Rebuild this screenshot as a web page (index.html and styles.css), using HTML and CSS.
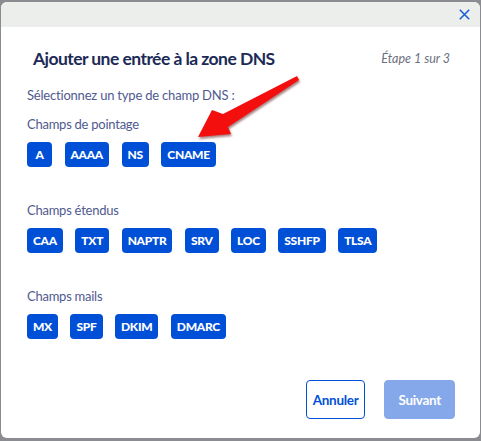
FILE: index.html
```html
<!DOCTYPE html>
<html lang="fr">
<head>
    <meta charset="UTF-8">
    <title>Ajouter une entrée à la zone DNS</title>
    <link rel="stylesheet" href="styles.css">
</head>
<body>
    <div class="modal">
        <div class="modal-head">
            <button class="close" aria-label="Fermer">
                <svg width="11" height="11" viewBox="0 0 11 11">
                    <path d="M0.8 0.8 L10.2 10.2 M10.2 0.8 L0.8 10.2" stroke="#1b5fd6" stroke-width="1.6" fill="none"/>
                </svg>
            </button>
        </div>

        <div class="modal-body">
            <div class="title-row">
                <h2>Ajouter une entrée à la zone DNS</h2>
                <span class="step">Étape 1 sur 3</span>
            </div>

            <p class="intro">Sélectionnez un type de champ DNS :</p>

            <p class="group-label">Champs de pointage</p>
            <div class="types">
                <button class="type">A</button>
                <button class="type">AAAA</button>
                <button class="type">NS</button>
                <button class="type">CNAME</button>
            </div>

            <p class="group-label spaced">Champs étendus</p>
            <div class="types">
                <button class="type">CAA</button>
                <button class="type">TXT</button>
                <button class="type">NAPTR</button>
                <button class="type">SRV</button>
                <button class="type">LOC</button>
                <button class="type">SSHFP</button>
                <button class="type">TLSA</button>
            </div>

            <p class="group-label spaced">Champs mails</p>
            <div class="types">
                <button class="type">MX</button>
                <button class="type">SPF</button>
                <button class="type">DKIM</button>
                <button class="type">DMARC</button>
            </div>
        </div>

        <div class="modal-foot">
            <button class="btn-cancel">Annuler</button>
            <button class="btn-next" disabled>Suivant</button>
        </div>

        <!-- flèche rouge d'annotation -->
        <svg class="arrow" width="481" height="441" viewBox="0 0 481 441">
            <polygon points="297,76 223,114 212,110 198,137 231,134 228,127 299,80" fill="#f40f0f"/>
        </svg>
    </div>
</body>
</html>
```

FILE: styles.css
```css
body, h2, p {
    margin: 0;
    padding: 0;
}

body {
    background-color: #8b8c91;
    font-family: Lato, "Open Sans", sans-serif;
}

.modal {
    position: relative;
    width: 479px;
    height: 436px;
    margin: 2px 0 0 1px;
    background-color: #fff;
    border-radius: 6px;
    overflow: hidden;
    display: flex;
    flex-direction: column;
}

.modal-head {
    height: 25px;
    background-color: #eceeec;
    display: flex;
    justify-content: flex-end;
    align-items: center;
    padding-right: 10px;
}

.close {
    border: none;
    background: none;
    padding: 0;
    width: 11px;
    height: 11px;
    display: flex;
    cursor: pointer;
}

.modal-body {
    padding: 19px 26px 0 26px;
    flex: 1;
}

.title-row {
    display: flex;
    justify-content: space-between;
    align-items: center;
    padding: 0 4px 0 6px;
    height: 24px;
}

.title-row h2 {
    font-size: 17.5px;
    font-weight: 700;
    letter-spacing: -0.55px;
    color: #1b2a56;
}

.step {
    font-size: 12.5px;
    font-style: italic;
    color: #6b6f80;
}

.intro {
    margin-top: 15px;
    font-size: 13px;
    line-height: 20px;
    letter-spacing: -0.2px;
    color: #4f5a8f;
}

.group-label {
    margin-top: 9px;
    font-size: 13px;
    line-height: 20px;
    letter-spacing: -0.25px;
    color: #4f5a8f;
}

.group-label.spaced {
    margin-top: 33px;
}

.types {
    display: flex;
    gap: 12.5px;
    margin-top: 8px;
}

.type {
    height: 25px;
    min-width: 25px;
    padding: 0 6px;
    border: none;
    border-radius: 4px;
    background-color: #0050d7;
    color: #fff;
    font-family: Lato, "Open Sans", sans-serif;
    font-size: 12px;
    font-weight: 900;
    letter-spacing: -0.3px;
    cursor: pointer;
}

.modal-foot {
    display: flex;
    justify-content: flex-end;
    gap: 19px;
    padding: 0 25px 19px 0;
}

.modal-foot button {
    height: 39px;
    border-radius: 4px;
    font-family: Lato, "Open Sans", sans-serif;
    font-size: 13.5px;
    font-weight: 700;
    letter-spacing: -0.3px;
}

.btn-cancel {
    background-color: #fff;
    border: 1px solid #0050d7;
    color: #0050d7;
    padding: 0 6px;
    cursor: pointer;
}

.btn-next {
    background-color: #84a8ea;
    border: 1px solid #84a8ea;
    color: #fff;
    padding: 0 13px;
}

.arrow {
    position: absolute;
    top: -2px;
    left: -1px;
    pointer-events: none;
    filter: drop-shadow(1px 2px 1px rgba(80, 0, 0, 0.5));
}
```
